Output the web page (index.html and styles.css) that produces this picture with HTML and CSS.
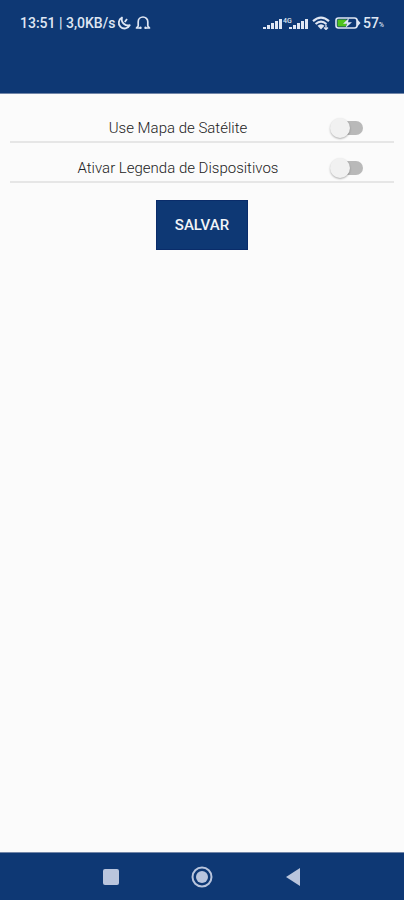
FILE: index.html
```html
<!DOCTYPE html>
<html lang="pt-BR">
<head>
    <meta charset="UTF-8">
    <meta name="viewport" content="width=device-width, initial-scale=1.0">
    <title>Configurações do Mapa</title>
    <link rel="stylesheet" href="styles.css">
</head>
<body>

<header class="header">
    <div class="status-bar">
        <div class="status-left">
            <span>13:51 | 3,0KB/s</span>
            <svg width="14" height="14" viewBox="0 0 14 14" fill="none" stroke="#dfe6f3" stroke-width="1.8" stroke-linejoin="round">
                <path d="M5 1.500A5.800 5.800 0 1 0 12.800 9.200C8.600 10.600 3.600 6.600 5 1.500Z"/>
                <path d="M10 3L7.800 6"/>
            </svg>
            <svg class="bell" width="16" height="14" viewBox="0 0 16 14" fill="none" stroke="#dfe6f3" stroke-width="1.7" stroke-linecap="round" stroke-linejoin="round">
                <path d="M5.500 12H1.500L3.200 10V5.800A4.800 4.800 0 0 1 12.800 5.800V10L14.500 12H10.500"/>
                <path d="M5.500 11.500v0.500M10.500 11.500v0.500" stroke-width="2.2"/>
            </svg>
        </div>
        <div class="status-right">
            <svg width="45" height="14" viewBox="0 0 45 14" fill="#dfe6f3">
                <path d="M0 11h3v2H0zM4 9h3v4H4zM8 7h3v6H8zM12 5h3v8h-3zM16 3h3v10h-3z"/>
                <path d="M26 11h3v2h-3zM30 9h3v4h-3zM34 7h3v6h-3zM38 5h3v8h-3zM42 3h3v10h-3z"/>
                <text class="network" x="20" y="7">4G</text>
            </svg>
            <svg class="wifi" width="18" height="14" viewBox="0 0 18 14" fill="none" stroke="#dfe6f3" stroke-width="2.2">
                <path d="M1 5.200Q9-1.800 17 5.200M3.600 8Q9 3.200 14.400 8"/>
                <path d="M5.500 9.800Q9 6.800 12.500 9.800L9 13.500Z" fill="#dfe6f3" stroke="none"/>
                <path d="M14 8.500v4.500M12 11.500l2 2 2-2" stroke-width="1.300"/>
            </svg>
            <svg class="battery" width="26" height="12" viewBox="0 0 26 12">
                <rect x="1" y="1" width="21" height="10" rx="2.500" fill="none" stroke="#dfe6f3" stroke-width="1.600"/>
                <path d="M22 2L25.500 6L22 10Z" fill="#dfe6f3"/>
                <rect x="2.500" y="2.500" width="9" height="7" fill="#4fc21c"/>
                <path d="M14 1L8 6.800H12L10.500 11L17 5.200H13Z" fill="#dfe6f3"/>
            </svg>
            <span>57</span><span class="percent">%</span>
        </div>
    </div>
</header>

<main class="settings">
    <div class="setting-row">
        <label for="satellite">Use Mapa de Satélite</label>
        <input type="checkbox" role="switch" class="switch" id="satellite">
    </div>
    <div class="setting-row">
        <label for="legend">Ativar Legenda de Dispositivos</label>
        <input type="checkbox" role="switch" class="switch" id="legend">
    </div>
    <button type="button" class="save-button">SALVAR</button>
</main>

<nav class="nav-bar">
    <button type="button" aria-label="Recentes">
        <svg width="22" height="22" viewBox="0 0 22 22"><rect x="3" y="3" width="16" height="16" rx="2" fill="#b9c5dd"/></svg>
    </button>
    <button type="button" aria-label="Início">
        <svg width="22" height="22" viewBox="0 0 22 22">
            <circle cx="11" cy="11" r="9.500" fill="none" stroke="#b9c5dd" stroke-width="2"/>
            <circle cx="11" cy="11" r="6" fill="#b9c5dd"/>
        </svg>
    </button>
    <button type="button" aria-label="Voltar">
        <svg width="22" height="22" viewBox="0 0 22 22"><path d="M4 11L18 2V20Z" fill="#b9c5dd"/></svg>
    </button>
</nav>

</body>
</html>
```

FILE: styles.css
```css
* {
    box-sizing: border-box;
}

body {
    font-family: Roboto, sans-serif;
    margin: 0;
    min-height: 100vh;
    display: flex;
    flex-direction: column;
    background-color: #fbfbfb;
    color: #222;
}

.header {
    background-color: #0e3874;
    height: 94px;
    border-bottom: 1px solid #7286a8;
}

/* Barra de status */
.status-bar {
    display: flex;
    justify-content: space-between;
    align-items: center;
    height: 46px;
    padding: 0 20px;
    color: #dfe6f3;
    font-size: 14px;
    font-weight: 500;
}

.status-left,
.status-right {
    display: flex;
    align-items: center;
}

.status-left {
    gap: 2px;
}

.bell {
    margin-left: 2px;
}

.wifi {
    margin-left: 4px;
}

.battery {
    margin: 0 2px 0 5px;
}

.network {
    font-size: 7px;
}

.percent {
    font-size: 7px;
    align-self: flex-end;
    line-height: 12px;
}

/* Opções */
.settings {
    flex: 1;
    padding: 9px 10px;
}

.setting-row {
    display: grid;
    grid-template-columns: 1fr 96px;
    align-items: center;
    justify-items: center;
    height: 40px;
    padding: 12px 0 0 48px;
    border-bottom: 2px solid #e6e6e6;
    font-size: 15px;
    font-weight: 300;
}

.switch {
    appearance: none;
    position: relative;
    width: 33px;
    height: 20px;
    margin: 0;
    cursor: pointer;
}

.switch::before {
    content: "";
    position: absolute;
    top: 3px;
    right: 0;
    width: 28px;
    height: 14px;
    border-radius: 7px;
    background-color: #b9b9b9;
}

.switch::after {
    content: "";
    position: absolute;
    top: 0;
    left: 0;
    width: 20px;
    height: 20px;
    border-radius: 50%;
    background-color: #f1f1f1;
    box-shadow: 0 1px 2px rgba(0, 0, 0, 0.3);
}

.switch:checked::before {
    background-color: #8ba3c8;
}

.switch:checked::after {
    left: 13px;
    background-color: #0e3874;
}

.save-button {
    display: block;
    margin: 17px auto 0;
    padding: 16px 18px;
    border: 1px solid #0a2c6a;
    background-color: #0e3874;
    color: #f2f4f8;
    font-family: inherit;
    font-size: 15px;
    font-weight: 500;
    line-height: 16px;
    cursor: pointer;
}

/* Barra de navegação */
.nav-bar {
    display: flex;
    justify-content: center;
    align-items: center;
    gap: 69px;
    height: 48px;
    background-color: #0e3874;
    border-top: 1px solid #7286a8;
}

.nav-bar button {
    padding: 0;
    border: none;
    background: none;
    cursor: pointer;
}

.nav-bar svg {
    display: block;
}
```
